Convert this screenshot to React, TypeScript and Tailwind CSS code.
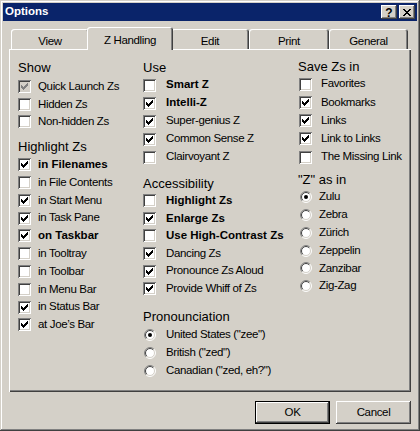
import React from "react";

type Item = {
  label: string;
  kind: "check" | "radio";
  checked?: boolean;
  bold?: boolean;
  disabled?: boolean;
};

const sans = "font-['Liberation_Sans',Arial,sans-serif]";
const regText = `${sans} text-[11.5px] tracking-[-0.35px] leading-none text-black whitespace-nowrap`;
const boldText = `${sans} text-[11.5px] leading-none font-bold text-black whitespace-nowrap`;
const headText = `${sans} text-[13px] leading-none text-black whitespace-nowrap flex items-center`;

const raised =
  "shadow-[inset_-1px_-1px_#404040,inset_1px_1px_#ffffff,inset_-2px_-2px_#808080,inset_2px_2px_#d4d0c8]";

function CheckMark({ color }: { color: string }) {
  return (
    <svg width="7" height="7" viewBox="0 0 7 7" shapeRendering="crispEdges" className="block">
      <path
        fill={color}
        d="M6 0h1v1H6z M5 1h2v1H5z M0 2h1v1H0z M4 2h3v1H4z M0 3h2v1H0z M3 3h3v1H3z M0 4h5v1H0z M1 5h3v1H1z M2 6h1v1H2z"
      />
    </svg>
  );
}

function Checkbox({ checked, disabled }: { checked?: boolean; disabled?: boolean }) {
  return (
    <span
      className={`block w-[13px] h-[13px] p-[3px] shadow-[inset_1px_1px_#808080,inset_-1px_-1px_#ffffff,inset_2px_2px_#404040,inset_-2px_-2px_#d4d0c8] ${
        disabled ? "bg-[#d4d0c8]" : "bg-white"
      }`}
    >
      {checked && <CheckMark color={disabled ? "#808080" : "#000000"} />}
    </span>
  );
}

function Radio({ checked }: { checked?: boolean }) {
  return (
    <svg width="12" height="12" viewBox="0 0 12 12" className="block">
      <circle cx="6" cy="6" r="5" fill="#ffffff" />
      <path d="M2.111 9.889A5.5 5.5 0 0 1 9.889 2.111" stroke="#808080" fill="none" />
      <path d="M9.889 2.111A5.5 5.5 0 0 1 2.111 9.889" stroke="#ffffff" fill="none" />
      <path d="M2.818 9.182A4.5 4.5 0 0 1 9.182 2.818" stroke="#404040" fill="none" />
      <path d="M9.182 2.818A4.5 4.5 0 0 1 2.818 9.182" stroke="#d4d0c8" fill="none" />
      {checked && <circle cx="6" cy="6" r="2" fill="#000000" />}
    </svg>
  );
}

function Group({
  title,
  className = "",
  titleH,
  rowsCls = "",
  rowH,
  cell,
  items,
}: {
  title: string;
  className?: string;
  titleH: string;
  rowsCls?: string;
  rowH: string;
  cell: string;
  items: Item[];
}) {
  return (
    <div className={className}>
      <div className={`${headText} ${titleH}`}>{title}</div>
      <div className={rowsCls}>
        {items.map((it) => (
          <div key={it.label} className={`flex items-center ${rowH}`}>
            <span className={`flex shrink-0 ${cell}`}>
              {it.kind === "check" ? (
                <Checkbox checked={it.checked} disabled={it.disabled} />
              ) : (
                <Radio checked={it.checked} />
              )}
            </span>
            <span className={it.bold ? boldText : regText}>{it.label}</span>
          </div>
        ))}
      </div>
    </div>
  );
}

const c = (label: string, checked = false, bold = false, disabled = false): Item => ({
  label,
  kind: "check",
  checked,
  bold,
  disabled,
});
const r = (label: string, checked = false): Item => ({ label, kind: "radio", checked });

const tabs = [
  { label: "View", w: "w-[78px]" },
  { label: "Z Handling", w: "w-[86px]", active: true },
  { label: "Edit", w: "w-[78px]" },
  { label: "Print", w: "w-[80px]" },
  { label: "General", w: "w-[79px]" },
];

export default function App() {
  return (
    <div className="w-[420px] h-[431px] bg-[#d4d0c8] p-[3px] flex flex-col shadow-[inset_-1px_-1px_#404040,inset_1px_1px_#d4d0c8,inset_-2px_-2px_#808080,inset_2px_2px_#ffffff]">
      {/* title bar */}
      <div className="h-[18px] bg-[#0a246a] flex items-center pl-[2px] pr-[2px]">
        <span className={`${sans} text-[11.5px] font-bold text-white leading-none`}>Options</span>
        <div className="ml-auto flex gap-[2px]">
          <span className={`w-[16px] h-[14px] bg-[#d4d0c8] ${raised} flex items-center justify-center`}>
            <span className={`${sans} text-[12px] font-bold leading-none text-black pt-[1px]`}>?</span>
          </span>
          <span className={`w-[16px] h-[14px] bg-[#d4d0c8] ${raised} flex items-center justify-center`}>
            <svg width="8" height="7" viewBox="0 0 8 7" shapeRendering="crispEdges" className="block">
              <path
                fill="#000000"
                d="M0 0h2v1H0z M6 0h2v1H6z M1 1h2v1H1z M5 1h2v1H5z M2 2h4v1H2z M3 3h2v1H3z M2 4h4v1H2z M1 5h2v1H1z M5 5h2v1H5z M0 6h2v1H0z M6 6h2v1H6z"
              />
            </svg>
          </span>
        </div>
      </div>

      <div className="mx-[6px] mt-[6px]">
        {/* tabs */}
        <div className="flex items-end h-[22px] pl-[2px]">
          {tabs.map((t) =>
            t.active ? (
              <div
                key={t.label}
                className={`${t.w} h-[23px] -mx-[2px] -mb-[1px] relative z-10 bg-[#d4d0c8] rounded-t-[3px] shadow-[inset_1px_1px_#ffffff,inset_-1px_0_#404040,inset_-2px_0_#808080] flex justify-center pt-[8px]`}
              >
                <span className={regText}>{t.label}</span>
              </div>
            ) : (
              <div
                key={t.label}
                className={`${t.w} h-[20px] bg-[#d4d0c8] rounded-t-[3px] shadow-[inset_1px_1px_#ffffff,inset_-1px_0_#404040,inset_-2px_0_#808080] flex justify-center pt-[7px]`}
              >
                <span className={regText}>{t.label}</span>
              </div>
            )
          )}
        </div>

        {/* panel */}
        <div className="h-[343px] bg-[#d4d0c8] shadow-[inset_1px_1px_#ffffff,inset_-1px_-1px_#404040,inset_-2px_-2px_#808080] grid grid-cols-[125px_155px_1fr] pt-[9px] pl-[9px]">
          <div>
            <Group
              title="Show"
              titleH="h-[18px]"
              rowsCls="mt-[2px]"
              rowH="h-[17.6px]"
              cell="w-[20px]"
              items={[c("Quick Launch Zs", true, false, true), c("Hidden Zs"), c("Non-hidden Zs")]}
            />
            <Group
              title="Highlight Zs"
              className="mt-[7px]"
              titleH="h-[18px]"
              rowH="h-[17.8px]"
              cell="w-[20px]"
              items={[
                c("in Filenames", true, true),
                c("in File Contents"),
                c("in Start Menu", true),
                c("in Task Pane", true),
                c("on Taskbar", true, true),
                c("in Tooltray"),
                c("in Toolbar"),
                c("in Menu Bar"),
                c("in Status Bar", true),
                c("at Joe\u2019s Bar", true),
              ]}
            />
          </div>

          <div>
            <Group
              title="Use"
              titleH="h-[18px]"
              rowH="h-[18px]"
              cell="w-[23px]"
              items={[
                c("Smart Z", false, true),
                c("Intelli-Z", true, true),
                c("Super-genius Z", true),
                c("Common Sense Z", true),
                c("Clairvoyant Z"),
              ]}
            />
            <Group
              title="Accessibility"
              className="mt-[8px]"
              titleH="h-[18px]"
              rowH="h-[17.6px]"
              cell="w-[23px]"
              items={[
                c("Highlight Zs", false, true),
                c("Enlarge Zs", true, true),
                c("Use High-Contrast Zs", false, true),
                c("Dancing Zs", true),
                c("Pronounce Zs Aloud", true),
                c("Provide Whiff of Zs", true),
              ]}
            />
            <Group
              title="Pronounciation"
              className="mt-[10px]"
              titleH="h-[18px]"
              rowH="h-[18px]"
              cell="w-[23px] pl-[1px]"
              items={[r('United States ("zee")', true), r('British ("zed")'), r('Canadian ("zed, eh?")')]}
            />
          </div>

          <div>
            <Group
              title="Save Zs in"
              titleH="h-[17px]"
              rowH="h-[18.25px]"
              cell="w-[23px] pl-[1px]"
              items={[c("Favorites"), c("Bookmarks", true), c("Links", true), c("Link to Links", true), c("The Missing Link")]}
            />
            <Group
              title={'"Z" as in'}
              className="mt-[5px]"
              titleH="h-[17px]"
              rowH="h-[17.8px]"
              cell="w-[21px] pl-[2px]"
              items={[r("Zulu", true), r("Zebra"), r("Zürich"), r("Zeppelin"), r("Zanzibar"), r("Zig-Zag")]}
            />
          </div>
        </div>
      </div>

      {/* buttons */}
      <div className="mt-[9px] flex justify-end gap-[6px] pr-[6px]">
        <button className="w-[75px] h-[23px] bg-[#d4d0c8] border border-black shadow-[inset_-1px_-1px_#404040,inset_1px_1px_#ffffff,inset_-2px_-2px_#808080,inset_2px_2px_#d4d0c8] flex items-center justify-center">
          <span className={regText}>OK</span>
        </button>
        <button className={`w-[75px] h-[23px] bg-[#d4d0c8] ${raised} flex items-center justify-center`}>
          <span className={regText}>Cancel</span>
        </button>
      </div>
    </div>
  );
}
